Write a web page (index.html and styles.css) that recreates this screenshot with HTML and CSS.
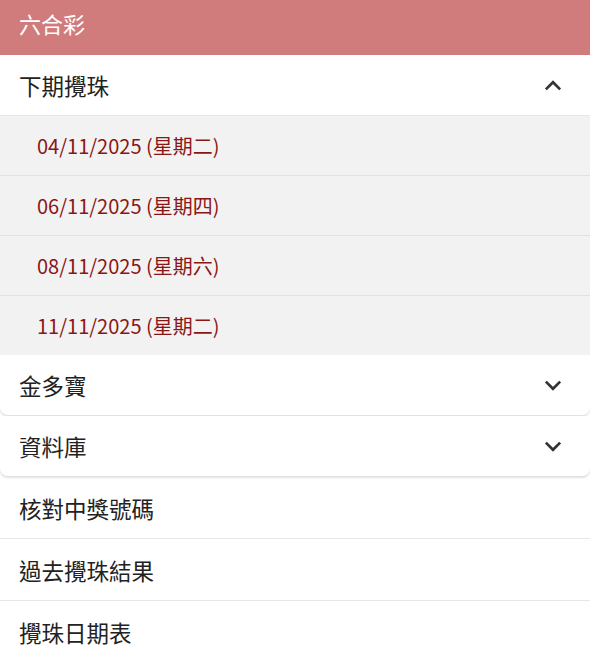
FILE: index.html
```html
<!DOCTYPE html>
<html lang="zh-Hant">
<head>
<meta charset="utf-8">
<link rel="stylesheet" href="styles.css">
</head>
<body>
<div class="header">六合彩</div>
<div class="accordion open">
  <div class="summary">
    <span>下期攪珠</span>
    <svg class="chev" viewBox="0 0 16 10" width="18" height="11"><path d="M1.5 8.5 L8 2 L14.5 8.5" fill="none" stroke="#333" stroke-width="2.4"/></svg>
  </div>
  <div class="dates">
    <div class="date">04/11/2025 (星期二)</div>
    <div class="date">06/11/2025 (星期四)</div>
    <div class="date">08/11/2025 (星期六)</div>
    <div class="date last">11/11/2025 (星期二)</div>
  </div>
</div>
<div class="accordion card">
  <div class="summary">
    <span>金多寶</span>
    <svg class="chev" viewBox="0 0 16 10" width="18" height="11"><path d="M1.5 1.5 L8 8 L14.5 1.5" fill="none" stroke="#333" stroke-width="2.4"/></svg>
  </div>
</div>
<div class="accordion card">
  <div class="summary">
    <span>資料庫</span>
    <svg class="chev" viewBox="0 0 16 10" width="18" height="11"><path d="M1.5 1.5 L8 8 L14.5 1.5" fill="none" stroke="#333" stroke-width="2.4"/></svg>
  </div>
</div>
<div class="link">核對中獎號碼</div>
<div class="link">過去攪珠結果</div>
<div class="link">攪珠日期表</div>
</body>
</html>
```
FILE: styles.css
```css
html, body {
  margin: 0;
  padding: 0;
  background: #ffffff;
  font-family: "Noto Sans CJK TC", "Noto Sans", sans-serif;
}
.header {
  height: 55px;
  background: #d17c7c;
  color: #ffffff;
  font-size: 22px;
  line-height: 47px;
  padding-left: 19px;
}
.summary {
  height: 61px;
  display: flex;
  align-items: center;
  justify-content: space-between;
  padding: 0 28px 0 19px;
  font-size: 22.5px;
  color: #222;
  box-sizing: border-box;
}
.open .summary {
  border-bottom: 1px solid #e6e6e6;
}
.dates {
  background: #f2f2f2;
}
.date {
  height: 60px;
  display: flex;
  align-items: center;
  padding-left: 37px;
  font-size: 20px;
  color: #8a1616;
  border-bottom: 1px solid #e2e2e2;
  box-sizing: border-box;
}
.date.last {
  border-bottom: none;
  height: 59px;
}
.card {
  background: #fff;
  border-radius: 0 0 8px 8px;
  box-shadow: 0 2px 2px rgba(0,0,0,0.12);
  margin-bottom: 1px;
}
.card .summary {
  height: 60px;
}
.link {
  height: 62px;
  display: flex;
  align-items: center;
  padding-left: 19px;
  font-size: 22.5px;
  color: #222;
  border-bottom: 1px solid #e6e6e6;
  box-sizing: border-box;
}
```
